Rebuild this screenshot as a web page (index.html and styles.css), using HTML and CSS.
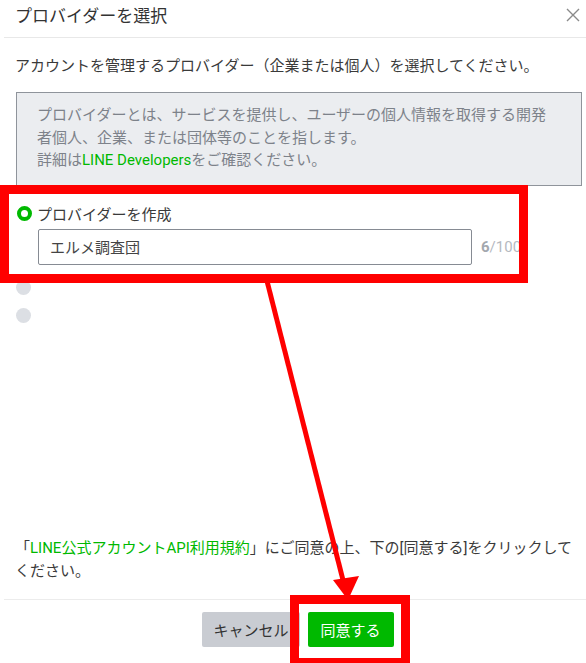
FILE: index.html
```html
<!DOCTYPE html>
<html lang="ja">
<head>
    <meta charset="UTF-8">
    <meta name="viewport" content="width=device-width, initial-scale=1.0">
    <title>プロバイダーを選択</title>
    <link rel="stylesheet" href="styles.css">
</head>
<body>
    <div class="dialog">
        <div class="dialog-header">
            <h2>プロバイダーを選択</h2>
            <button class="close" aria-label="閉じる">
                <svg width="14" height="14" viewBox="0 0 14 14"><path d="M1 1L13 13M13 1L1 13" stroke="#8a8a8a" stroke-width="1.4" fill="none"/></svg>
            </button>
        </div>

        <div class="dialog-body">
            <p class="lead">アカウントを管理するプロバイダー（企業または個人）を選択してください。</p>

            <div class="info">
                プロバイダーとは、サービスを提供し、ユーザーの個人情報を取得する開発者個人、企業、または団体等のことを指します。<br>
                詳細は<a href="#">LINE Developers</a>をご確認ください。
            </div>

            <ul class="providers">
                <li class="provider selected">
                    <label class="provider-label"><span class="radio"></span>プロバイダーを作成</label>
                    <div class="name-row">
                        <input type="text" class="name-input" value="エルメ調査団">
                        <span class="count"><b>6</b>/100</span>
                    </div>
                </li>
                <li class="provider"><span class="radio off"></span></li>
                <li class="provider"><span class="radio off"></span></li>
            </ul>

            <p class="terms">「<a href="#">LINE公式アカウントAPI利用規約</a>」にご同意の上、下の[同意する]をクリックしてください。</p>
        </div>

        <div class="dialog-footer">
            <button class="btn btn-cancel">キャンセル</button>
            <button class="btn btn-agree">同意する</button>
        </div>

        <!-- annotation drawn over the dialog -->
        <svg class="marks" width="586" height="663" viewBox="0 0 586 663">
            <rect x="4.5" y="189.5" width="519" height="89" fill="none" stroke="#ff0000" stroke-width="9"/>
            <rect x="294.5" y="599.5" width="111" height="63" fill="none" stroke="#ff0000" stroke-width="9"/>
            <line x1="267" y1="281" x2="344" y2="584" stroke="#ff0000" stroke-width="5"/>
            <polygon points="333,580 359,576 348,600" fill="#ff0000"/>
        </svg>
    </div>
</body>
</html>
```

FILE: styles.css
```css
* {
    box-sizing: border-box;
}

body {
    margin: 0;
    background: #fff;
    color: #3a3a3a;
    font-family: Roboto, "Noto Sans CJK JP", sans-serif;
    font-size: 15px;
}

.dialog {
    position: relative;
    width: 586px;
    height: 663px;
    display: flex;
    flex-direction: column;
}

.dialog-header {
    height: 38px;
    margin-left: 4px;
    padding: 0 6px 0 11px;
    border-bottom: 1px solid #e8e8e8;
    display: flex;
    justify-content: space-between;
    align-items: flex-start;
}

.dialog-header h2 {
    margin: 0;
    font-size: 17px;
    font-weight: normal;
    line-height: 32px;
    color: #333;
}

.close {
    margin-top: 8px;
    padding: 0;
    border: none;
    background: none;
    width: 14px;
    height: 14px;
}

.dialog-body {
    flex: 1;
    display: flex;
    flex-direction: column;
    padding: 17px 10px 16px 15px;
}

.lead {
    margin: 0;
    line-height: 22px;
}

.info {
    margin: 15px 0 0 1px;
    width: 566px;
    padding: 11px 24px 13px 20px;
    background: #ebedf0;
    border: 1px solid #8f949b;
    color: #7d828a;
    line-height: 22.5px;
}

a {
    color: #00b900;
    text-decoration: none;
}

.providers {
    list-style: none;
    margin: 17px 0 0;
    padding: 0;
    display: flex;
    flex-direction: column;
    gap: 6px;
}

.provider {
    height: 22px;
    display: flex;
    align-items: center;
}

.provider.selected {
    height: auto;
    display: block;
}

.provider-label {
    display: flex;
    align-items: center;
    height: 22px;
    gap: 5px;
    margin-left: 1px;
}

.radio {
    width: 15px;
    height: 15px;
    border-radius: 50%;
    border: 4px solid #00b900;
    background: #fff;
    margin-left: 1px;
    flex: none;
}

.radio.off {
    border: none;
    background: #dcdfe4;
}

.name-row {
    display: flex;
    align-items: center;
    margin: 4px 0 6px 23px;
    gap: 9px;
}

.name-input {
    width: 434px;
    height: 36px;
    padding: 0 11px;
    border: 1px solid #868b93;
    border-radius: 2px;
    font-family: Roboto, "Noto Sans CJK JP", sans-serif;
    font-size: 15px;
    color: #444;
    outline: none;
}

.count {
    color: #b5b9bf;
}

.count b {
    color: #a3a8ae;
}

.terms {
    margin: auto 0 0;
    line-height: 23px;
}

.dialog-footer {
    margin-left: 4px;
    height: 64px;
    border-top: 1px solid #ececec;
    padding: 12px 0 0 6px;
    display: flex;
    justify-content: center;
    align-items: flex-start;
    gap: 8px;
}

.btn {
    height: 35px;
    border: none;
    border-radius: 2px;
    font-family: Roboto, "Noto Sans CJK JP", sans-serif;
    font-size: 15px;
    cursor: pointer;
}

.btn-cancel {
    padding: 0 11px;
    background: #c9ccd2;
    color: #333;
}

.btn-agree {
    padding: 0 13px;
    background: #00b900;
    color: #fff;
}

.marks {
    position: absolute;
    top: 0;
    left: 0;
    pointer-events: none;
}
```
